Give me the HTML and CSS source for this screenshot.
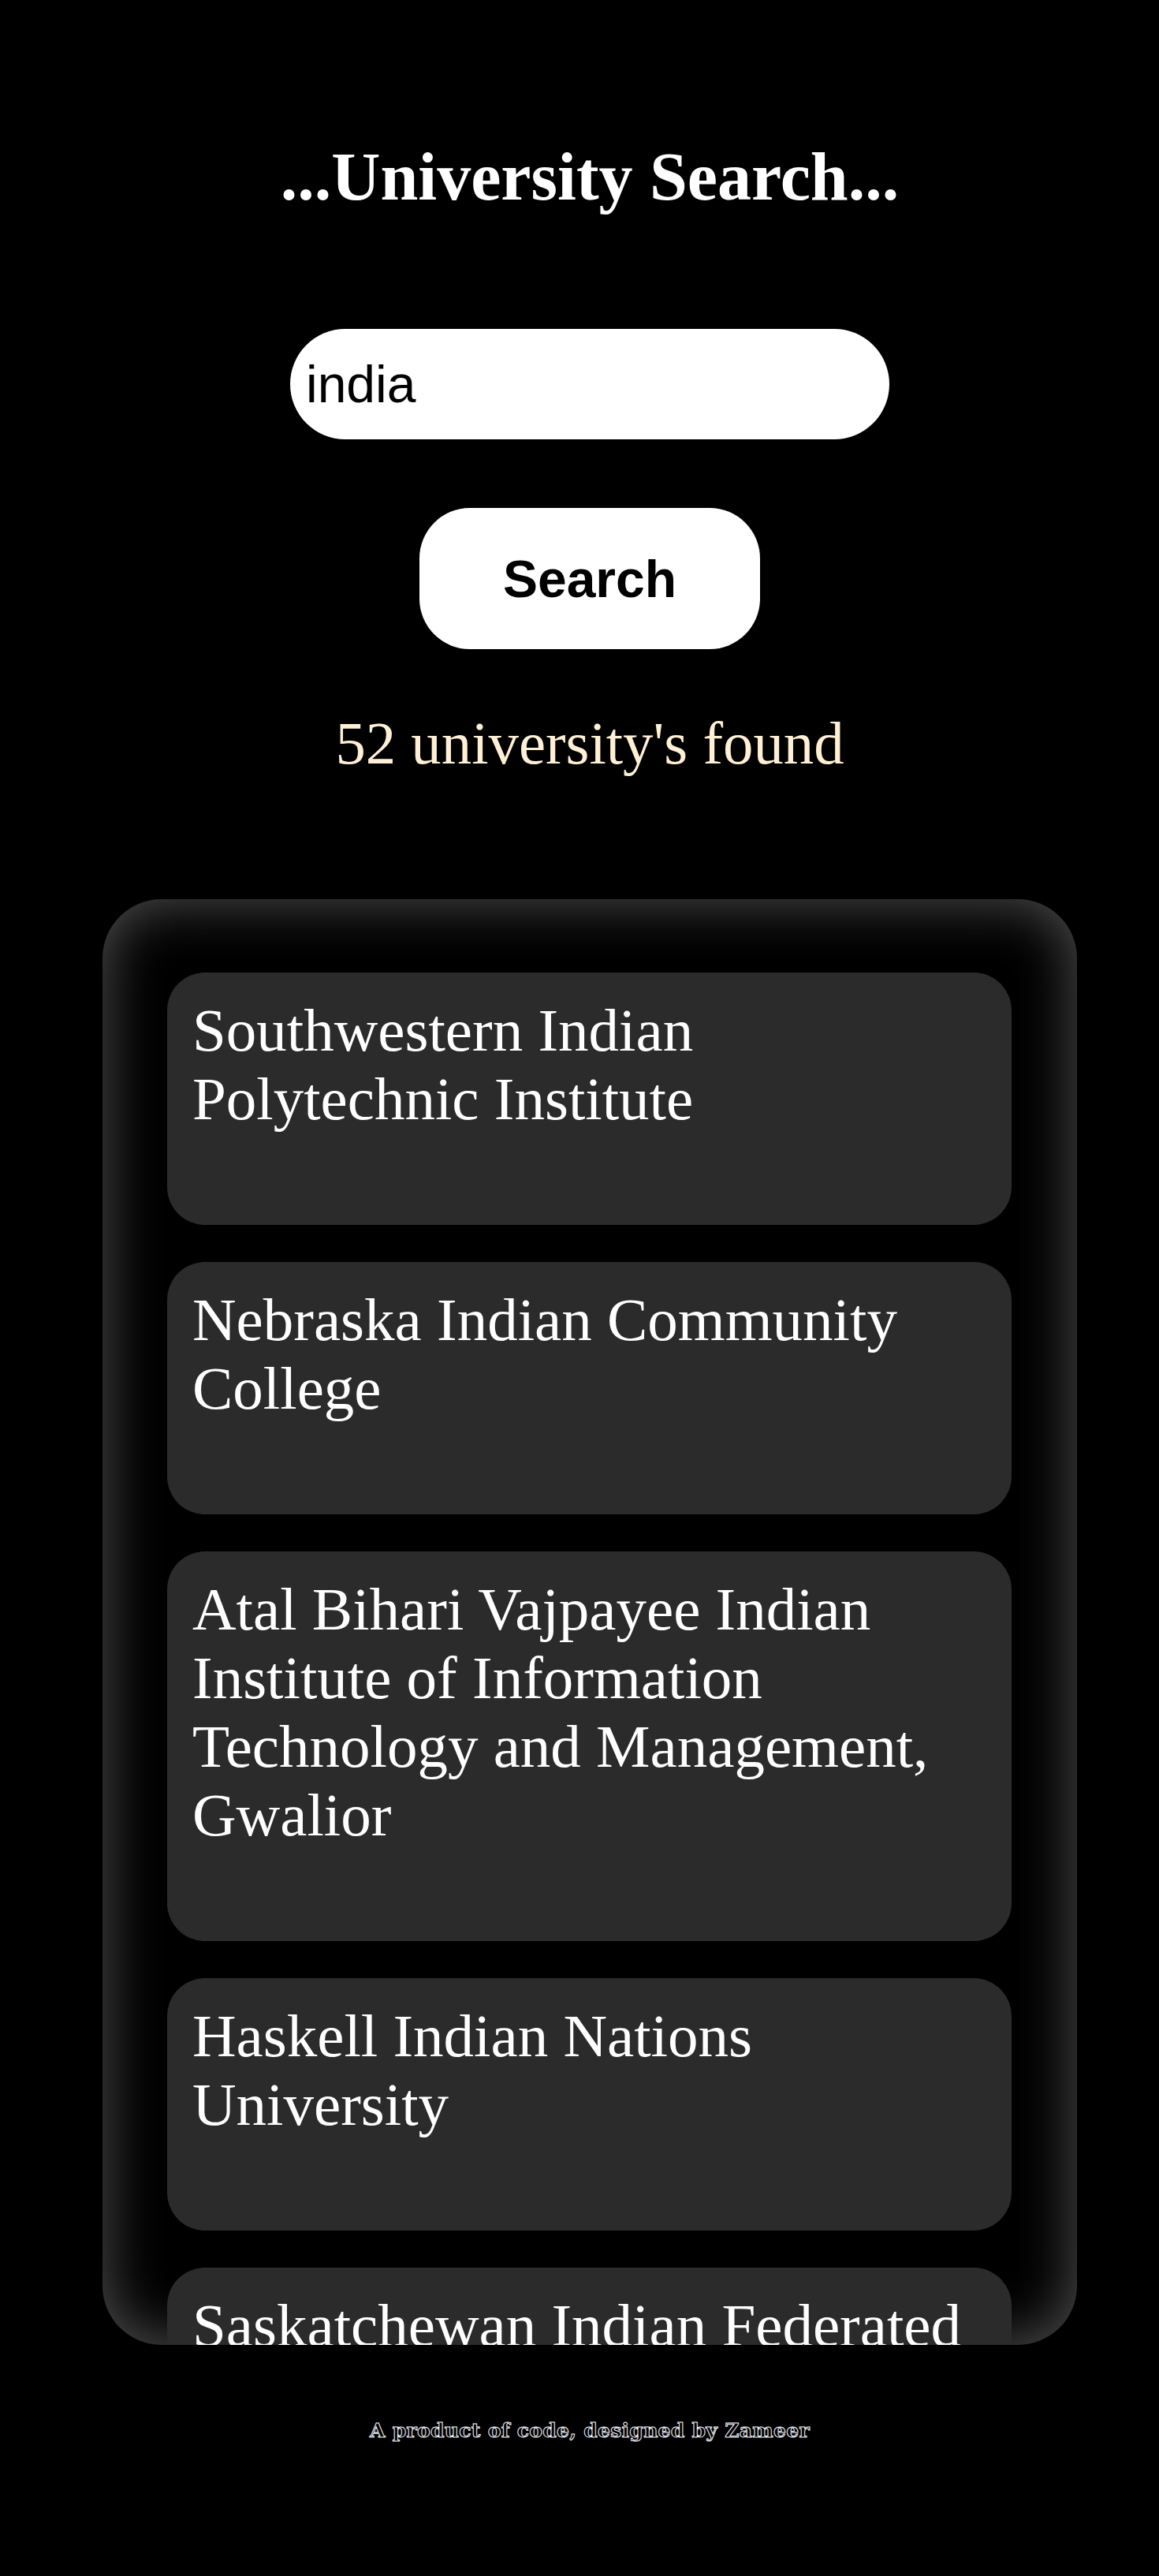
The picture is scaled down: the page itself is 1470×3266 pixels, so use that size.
FILE: index.html
```html
<!DOCTYPE html>
<html lang="en">
<head>
<meta charset="utf-8">
<title>University Search</title>
<link rel="stylesheet" href="styles.css">
</head>
<body>
<main class="page">
  <h1 class="title">...University Search...</h1>
  <input class="search-input" type="text" value="india">
  <button class="search-btn" type="button">Search</button>
  <p class="count">52 university's found</p>
  <section class="results">
    <div class="card"><h2 class="card-name">Southwestern Indian Polytechnic Institute</h2></div>
    <div class="card"><h2 class="card-name">Nebraska Indian Community College</h2></div>
    <div class="card"><h2 class="card-name">Atal Bihari Vajpayee Indian Institute of Information Technology and Management, Gwalior</h2></div>
    <div class="card"><h2 class="card-name">Haskell Indian Nations University</h2></div>
    <div class="card"><h2 class="card-name">Saskatchewan Indian Federated College</h2></div>
  </section>
  <footer class="footer">A product of code, designed by Zameer</footer>
</main>
</body>
</html>
```
FILE: styles.css
```css
html, body {
  margin: 0;
  padding: 0;
  background: #000;
}

.page {
  display: flex;
  flex-direction: column;
  align-items: center;
  padding: 0 0 120px 26px;
  font-family: "Liberation Serif", "Times New Roman", serif;
  color: #fff;
}

.title {
  margin: 174px 0 0;
  font-family: "Liberation Serif", "Times New Roman", serif;
  font-weight: 700;
  font-size: 86px;
  line-height: 100px;
  color: #fff;
  text-align: center;
}

.search-input {
  margin-top: 143px;
  box-sizing: border-box;
  width: 760px;
  height: 140px;
  border: none;
  border-radius: 70px;
  background: #fff;
  color: #000;
  padding: 0 20px;
  font-family: "Liberation Sans", Arial, sans-serif;
  font-size: 66px;
  outline: none;
}

.search-btn {
  margin-top: 87px;
  box-sizing: border-box;
  width: 432px;
  height: 179px;
  border: none;
  border-radius: 64px;
  background: #fff;
  color: #000;
  font-family: "Liberation Sans", Arial, sans-serif;
  font-weight: 700;
  font-size: 66px;
  padding: 0;
}

.count {
  margin: 75px 0 0;
  font-size: 76.8px;
  line-height: 90px;
  color: #ffefd5;
  text-align: center;
}

.results {
  margin-top: 152px;
  box-sizing: border-box;
  width: 1236px;
  height: 1833px;
  border-radius: 75px;
  background: #000;
  box-shadow: inset 0 0 70px 4px #4e4e4e;
  overflow: hidden;
  padding: 93px 83px 0 82px;
  display: flex;
  flex-direction: column;
  gap: 47px;
}

.card {
  flex: none;
  background: #2b2b2b;
  border-radius: 48px;
  padding: 30px 40px 116px 32px;
}

.card-name {
  margin: 0;
  font-family: "Liberation Serif", "Times New Roman", serif;
  font-weight: 400;
  font-size: 77px;
  line-height: 87px;
  color: #fff;
}

.footer {
  margin-top: 94px;
  font-family: "DejaVu Serif", serif;
  font-weight: 700;
  font-size: 25px;
  letter-spacing: 0.3px;
  line-height: 30px;
  color: #000;
  -webkit-text-stroke: 1px #f4f8ff;
  text-align: center;
}
```
